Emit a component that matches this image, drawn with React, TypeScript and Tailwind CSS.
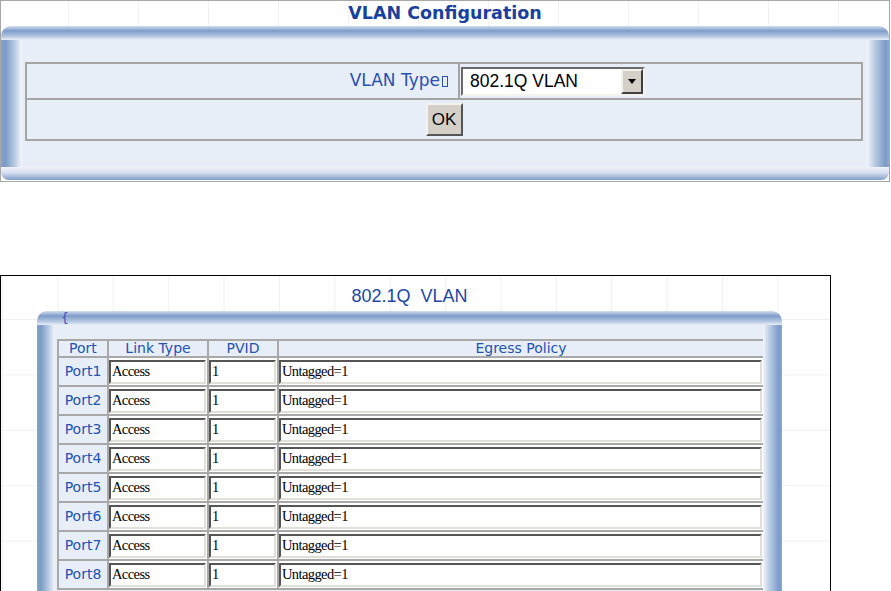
import React from "react";

const ports = ["Port1", "Port2", "Port3", "Port4", "Port5", "Port6", "Port7", "Port8"];

const sans = "font-['DejaVu_Sans',Verdana,sans-serif]";
const arial = "font-['Liberation_Sans',Arial,sans-serif]";
const serif = "font-['Liberation_Serif','Times_New_Roman',serif]";

function TopBar({ children }: { children?: React.ReactNode }) {
  return (
    <div className="relative h-[14px] rounded-t-[10px] bg-[linear-gradient(to_bottom,#d3def0,#7e9cc8_35%,#b6c8e2_75%,#e8eef7)]">
      {children}
    </div>
  );
}

function SideBar({ side, w }: { side: "l" | "r"; w: string }) {
  return (
    <div
      className={`${w} shrink-0 ${
        side === "l"
          ? "bg-[linear-gradient(to_right,#86a3cc,#7b9ac6_20%,#b9cbe3_65%,#f3f6fb)]"
          : "bg-[linear-gradient(to_right,#f3f6fb,#b9cbe3_35%,#7b9ac6_85%,#8ea9cf)]"
      }`}
    />
  );
}

function Inset({ value, w }: { value: string; w: string }) {
  return (
    <input
      readOnly
      value={value}
      className={`${w} h-[24px] border-2 border-t-[#555] border-l-[#555] border-b-[#e2dfd8] border-r-[#e2dfd8] bg-white pl-[1px] text-[14.5px] tracking-[-0.6px] text-black outline-none ${serif}`}
    />
  );
}

export default function App() {
  return (
    <div className="relative h-[591px] w-[891px] overflow-hidden bg-white">
      {/* VLAN Configuration */}
      <div className="flex h-[182px] w-[890px] flex-col border border-[#a8a8a8]">
        <div className="flex h-[25px] items-center justify-center bg-[linear-gradient(to_right,#f1f1f1_1px,transparent_1px)] bg-[size:70px_100%] bg-[position:67px_0]">
          <h1 className={`text-[17.5px] font-bold leading-none text-[#1b3f9c] ${sans}`}>VLAN Configuration</h1>
        </div>
        <div className="flex flex-col">
          <TopBar />
          <div className="flex h-[127px]">
            <SideBar side="l" w="w-[21px]" />
            <div className="flex-1 bg-[#e8eef7] pl-[3px] pt-[22px]">
              <div className="w-[838px] border-2 border-[#a4a4a4]">
                <div className="flex h-[34px]">
                  <div className={`flex w-[431px] items-center justify-end pr-[10px] text-[17px] text-[#2b50b2] ${sans}`}>
                    VLAN Type
                    <span className="ml-[2px] inline-block h-[11px] w-[6px] border border-[#2b50b2]" />
                  </div>
                  <div className="w-[2px] bg-[#a4a4a4]" />
                  <div className="flex items-center pl-[1px]">
                    <div className="flex h-[29px] w-[184px] border-2 border-t-[#6a6a6a] border-l-[#6a6a6a] border-b-[#f4f2ee] border-r-[#f4f2ee] bg-white">
                      <span className={`flex flex-1 items-center pl-[7px] text-[17.5px] text-black ${arial}`}>802.1Q VLAN</span>
                      <span className="flex w-[22px] items-center justify-center border-2 border-t-[#f4f2ee] border-l-[#f4f2ee] border-b-[#404040] border-r-[#404040] bg-[#d4d0c8]">
                        <svg width="8" height="5" viewBox="0 0 8 5">
                          <path d="M0 0h8L4 5z" fill="#000" />
                        </svg>
                      </span>
                    </div>
                  </div>
                </div>
                <div className="h-[2px] bg-[#a4a4a4]" />
                <div className="flex h-[39px] items-center justify-center">
                  <button
                    className={`h-[33px] w-[37px] border-2 border-t-[#f4f2ee] border-l-[#f4f2ee] border-b-[#555] border-r-[#555] bg-[#d4d0c8] text-[17px] text-black ${arial}`}
                  >
                    OK
                  </button>
                </div>
              </div>
            </div>
            <SideBar side="r" w="w-[22px]" />
          </div>
          <div className="h-[13px] rounded-b-[8px] bg-[linear-gradient(to_bottom,#f3f1f8,#d5def0_45%,#7e9cc8)]" />
        </div>
      </div>

      {/* 802.1Q VLAN */}
      <div className="mt-[93px] h-[330px] w-[831px] border border-black bg-[linear-gradient(to_right,#f0f0f0_1px,transparent_1px),linear-gradient(to_bottom,#f0f0f0_1px,transparent_1px)] bg-[size:55.4px_55.4px] bg-[position:1px_43px]">
        <div className="ml-[36px] w-[745px]">
          <div className="flex h-[35px] items-center justify-center pt-[6px]">
            <h2 className={`text-[18px] text-[#1d48a8] whitespace-pre ${arial}`}>802.1Q  VLAN</h2>
          </div>
          <TopBar>
            <span className={`absolute left-[24px] top-[-2px] text-[12px] text-[#2b50b2] ${sans}`}>{"{"}</span>
          </TopBar>
          <div className="flex h-[300px]">
            <SideBar side="l" w="w-[18px]" />
            <div className="w-[708px] bg-[#e8eef7] pl-[2px] pt-[14px]">
              <table className={`w-[706px] table-fixed border-collapse text-[14px] text-[#2352b4] ${sans}`}>
                <colgroup>
                  <col className="w-[50px]" />
                  <col className="w-[100px]" />
                  <col className="w-[70px]" />
                  <col className="w-[486px]" />
                </colgroup>
                <thead>
                  <tr className="h-[17px]">
                    {["Port", "Link Type", "PVID", "Egress Policy"].map((h) => (
                      <th key={h} className="border-2 border-[#a8a8a8] p-0 text-center font-normal leading-[13px]">
                        {h}
                      </th>
                    ))}
                  </tr>
                </thead>
                <tbody>
                  {ports.map((p) => (
                    <tr key={p} className="h-[29px]">
                      <td className="border-2 border-[#a8a8a8] p-0 text-center">{p}</td>
                      <td className="border-2 border-[#a8a8a8] bg-white p-0">
                        <Inset value="Access" w="w-[97px]" />
                      </td>
                      <td className="border-2 border-[#a8a8a8] bg-white p-0">
                        <Inset value="1" w="w-[67px]" />
                      </td>
                      <td className="border-2 border-[#a8a8a8] bg-white p-0">
                        <Inset value="Untagged=1" w="w-[483px]" />
                      </td>
                    </tr>
                  ))}
                </tbody>
              </table>
            </div>
            <SideBar side="r" w="w-[19px]" />
          </div>
        </div>
      </div>
    </div>
  );
}
